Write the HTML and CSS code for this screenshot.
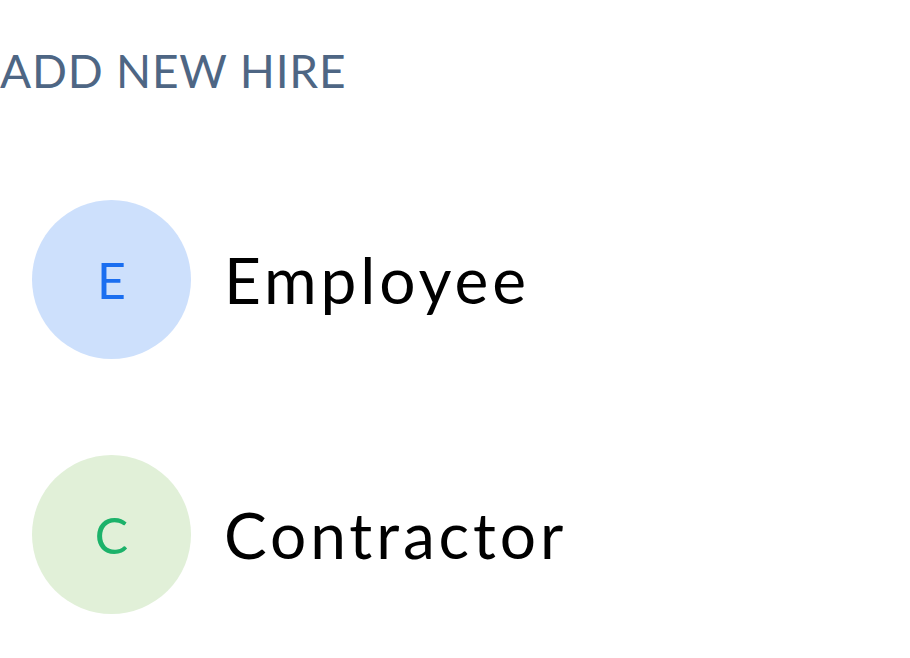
FILE: index.html
```html
<!DOCTYPE html>
<html>
<head>
<meta charset="utf-8">
<link rel="stylesheet" href="styles.css">
</head>
<body>
<div class="page">
  <h1 class="title">ADD NEW HIRE</h1>
  <ul class="list">
    <li class="item">
      <span class="avatar avatar-blue">E</span>
      <span class="label">Employee</span>
    </li>
    <li class="item">
      <span class="avatar avatar-green">C</span>
      <span class="label">Contractor</span>
    </li>
  </ul>
</div>
</body>
</html>
```
FILE: styles.css
```css
html, body {
  margin: 0;
  padding: 0;
  background: #ffffff;
}
.page {
  font-family: "Lato", "Noto Sans", sans-serif;
  width: 910px;
  height: 658px;
  overflow: hidden;
}
.title {
  margin: 0;
  padding: 43px 0 0 0;
  font-size: 46px;
  font-weight: 400;
  color: #4e6684;
  letter-spacing: 0.8px;
  line-height: 56px;
}
.list {
  list-style: none;
  margin: 101px 0 0 32px;
  padding: 0;
  display: flex;
  flex-direction: column;
  gap: 96px;
}
.item {
  display: flex;
  align-items: center;
  gap: 33px;
}
.avatar {
  width: 159px;
  height: 159px;
  border-radius: 50%;
  display: flex;
  align-items: center;
  justify-content: center;
  font-size: 50px;
  line-height: 1;
  flex-shrink: 0;
}
.avatar-blue {
  background: #cde0fc;
  color: #1a6ef0;
}
.avatar-green {
  background: #e1f0d8;
  color: #1cb26a;
}
.label {
  font-size: 64px;
  color: #000000;
  letter-spacing: 3.9px;
}
```
